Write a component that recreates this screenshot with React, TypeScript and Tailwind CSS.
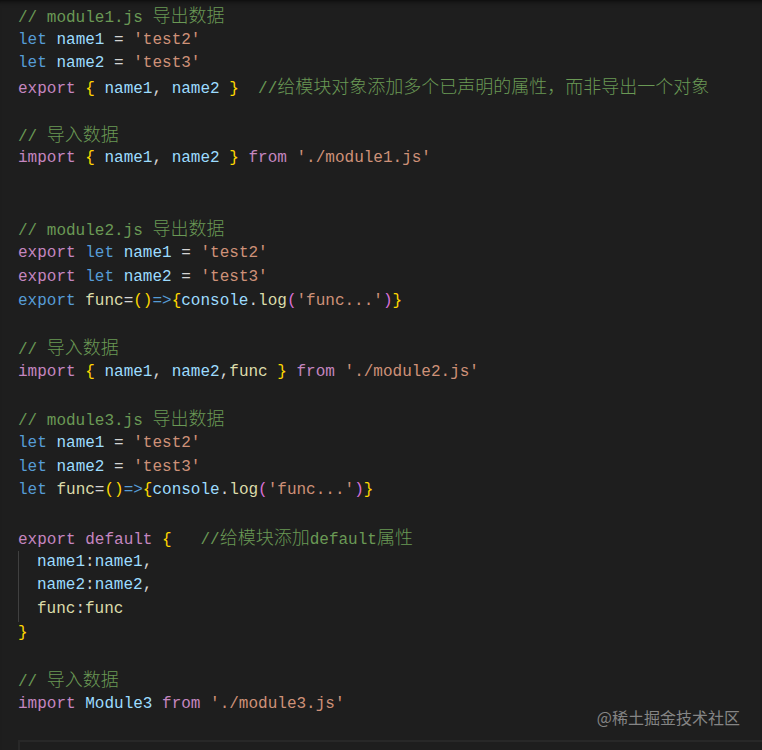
type Tok = [string, string];

const K = "text-[#C586C0]";
const B = "text-[#569CD6]";
const V = "text-[#9CDCFE]";
const S = "text-[#CE9178]";
const C = "text-[#6A9955]";
const F = "text-[#DCDCAA]";
const P = "text-[#D4D4D4]";
const Y = "text-[#FFD700]";
const M = "text-[#DA70D6]";
const Z = "cjk"; // chinese chars inside a comment

function Line({ toks = [] }: { toks?: Tok[] }) {
  return (
    <div className="h-[23.72px] leading-[23.72px] whitespace-pre">
      {toks.map(([t, c], i) =>
        c === Z ? (
          <span
            key={i}
            className="text-[#6A9955] text-[18px] font-light font-['Noto_Sans_CJK_SC',sans-serif] leading-none"
          >
            {t}
          </span>
        ) : (
          <span key={i} className={c}>
            {t}
          </span>
        )
      )}
    </div>
  );
}

const sp: Tok = [" ", P];

export default function App() {
  return (
    <div className="relative w-[762px] h-[750px] overflow-hidden bg-[#1e1e1e] shadow-[inset_0_6px_6px_-6px_#000] pt-[5px] pl-[18px] font-['Liberation_Mono',monospace] text-[16px]">
      <Line toks={[["// module1.js ", C], ["导出数据", Z]]} />
      <Line toks={[["let", B], sp, ["name1", V], [" = ", P], ["'test2'", S]]} />
      <Line toks={[["let", B], sp, ["name2", V], [" = ", P], ["'test3'", S]]} />
      <Line
        toks={[
          ["export", K], sp, ["{", Y], sp, ["name1", V], [", ", P], ["name2", V], sp, ["}", Y],
          ["  ", P], ["//", C], ["给模块对象添加多个已声明的属性，而非导出一个对象", Z],
        ]}
      />
      <Line />
      <Line toks={[["// ", C], ["导入数据", Z]]} />
      <Line
        toks={[
          ["import", K], sp, ["{", Y], sp, ["name1", V], [", ", P], ["name2", V], sp, ["}", Y],
          sp, ["from", K], sp, ["'./module1.js'", S],
        ]}
      />
      <Line />
      <Line />
      <Line toks={[["// module2.js ", C], ["导出数据", Z]]} />
      <Line toks={[["export", K], sp, ["let", B], sp, ["name1", V], [" = ", P], ["'test2'", S]]} />
      <Line toks={[["export", K], sp, ["let", B], sp, ["name2", V], [" = ", P], ["'test3'", S]]} />
      <Line
        toks={[
          ["export", B], sp, ["func", F], ["=", P], ["()", Y], ["=>", B], ["{", Y], ["console", V],
          [".", P], ["log", F], ["(", M], ["'func...'", S], [")", M], ["}", Y],
        ]}
      />
      <Line />
      <Line toks={[["// ", C], ["导入数据", Z]]} />
      <Line
        toks={[
          ["import", K], sp, ["{", Y], sp, ["name1", V], [", ", P], ["name2", V], [",", P], ["func", F],
          sp, ["}", Y], sp, ["from", K], sp, ["'./module2.js'", S],
        ]}
      />
      <Line />
      <Line toks={[["// module3.js ", C], ["导出数据", Z]]} />
      <Line toks={[["let", B], sp, ["name1", V], [" = ", P], ["'test2'", S]]} />
      <Line toks={[["let", B], sp, ["name2", V], [" = ", P], ["'test3'", S]]} />
      <Line
        toks={[
          ["let", B], sp, ["func", F], ["=", P], ["()", Y], ["=>", B], ["{", Y], ["console", V],
          [".", P], ["log", F], ["(", M], ["'func...'", S], [")", M], ["}", Y],
        ]}
      />
      <Line />
      <Line
        toks={[
          ["export", K], sp, ["default", K], sp, ["{", Y], ["   ", P], ["//", C], ["给模块添加", Z],
          ["default", C], ["属性", Z],
        ]}
      />
      <div className="border-l border-[#404040] pl-[18px]">
        <Line toks={[["name1", V], [":", P], ["name1", V], [",", P]]} />
        <Line toks={[["name2", V], [":", P], ["name2", V], [",", P]]} />
        <Line toks={[["func", F], [":", P], ["func", F]]} />
      </div>
      <Line toks={[["}", Y]]} />
      <Line />
      <Line toks={[["// ", C], ["导入数据", Z]]} />
      <Line
        toks={[["import", K], sp, ["Module3", V], sp, ["from", K], sp, ["'./module3.js'", S]]}
      />
      <Line />
      <div className="h-[24px] border-t-2 border-l-2 border-[#282828]" />

      <div className="absolute right-[22px] top-[706px] text-[16px] leading-[22px] text-[#858585] font-['Noto_Sans_CJK_SC',sans-serif]">
        @稀土掘金技术社区
      </div>
    </div>
  );
}
